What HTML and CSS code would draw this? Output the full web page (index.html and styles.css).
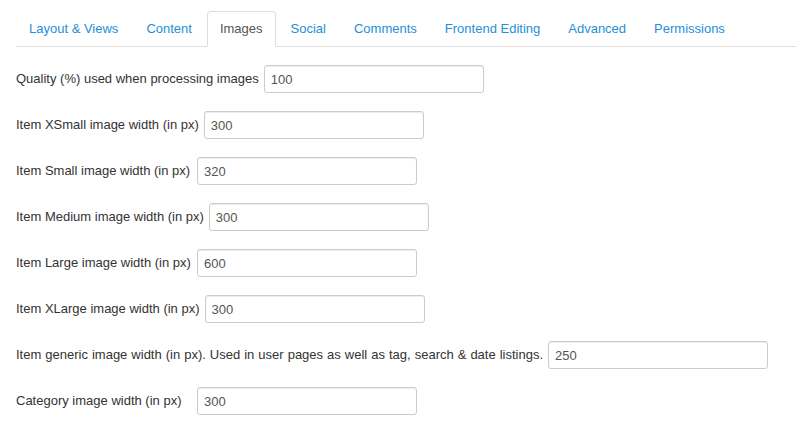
FILE: index.html
```html
<!DOCTYPE html>
<html lang="en">
<head>
    <meta charset="UTF-8">
    <meta name="viewport" content="width=device-width, initial-scale=1.0">
    <title>Images settings</title>
    <link rel="stylesheet" href="styles.css">
</head>
<body>
    <div class="container">
        <!-- Onglets -->
        <ul class="nav-tabs">
            <li><a href="#">Layout &amp; Views</a></li>
            <li><a href="#">Content</a></li>
            <li class="active"><a href="#">Images</a></li>
            <li><a href="#">Social</a></li>
            <li><a href="#">Comments</a></li>
            <li><a href="#">Frontend Editing</a></li>
            <li><a href="#">Advanced</a></li>
            <li><a href="#">Permissions</a></li>
        </ul>

        <!-- Paramètres des images -->
        <div class="tab-content">
            <div class="control-group">
                <label for="quality">Quality (%) used when processing images</label>
                <input type="text" id="quality" value="100">
            </div>
            <div class="control-group">
                <label for="xsmall">Item XSmall image width (in px)</label>
                <input type="text" id="xsmall" value="300">
            </div>
            <div class="control-group">
                <label for="small">Item Small image width (in px)</label>
                <input type="text" id="small" value="320">
            </div>
            <div class="control-group">
                <label for="medium">Item Medium image width (in px)</label>
                <input type="text" id="medium" value="300">
            </div>
            <div class="control-group">
                <label for="large">Item Large image width (in px)</label>
                <input type="text" id="large" value="600">
            </div>
            <div class="control-group">
                <label for="xlarge">Item XLarge image width (in px)</label>
                <input type="text" id="xlarge" value="300">
            </div>
            <div class="control-group">
                <label for="generic" class="long-label">Item generic image width (in px). Used in user pages as well as tag, search &amp; date listings.</label>
                <input type="text" id="generic" value="250">
            </div>
            <div class="control-group">
                <label for="category">Category image width (in px)</label>
                <input type="text" id="category" value="300">
            </div>
        </div>
    </div>
</body>
</html>
```

FILE: styles.css
```css
body {
    margin: 0;
    font-family: "Liberation Sans", Arial, sans-serif;
    font-size: 13px;
    line-height: 18px;
    color: #333;
    background-color: #fff;
}
.container {
    padding: 11px 0 0 16px;
}
.nav-tabs {
    display: flex;
    list-style: none;
    margin: 0 0 18px 0;
    padding: 0;
    border-bottom: 1px solid #ddd;
}
.nav-tabs li {
    margin-bottom: -1px;
}
.nav-tabs a {
    display: block;
    padding: 8px 12px;
    margin-right: 2px;
    line-height: 18px;
    border: 1px solid transparent;
    border-radius: 4px 4px 0 0;
    color: #1e8fd8;
    text-decoration: none;
}
.nav-tabs .active a {
    color: #555;
    background-color: #fff;
    border-color: #ddd #ddd transparent;
}
.control-group {
    display: flex;
    align-items: center;
    margin-bottom: 18px;
}
.control-group label {
    min-width: 176px;
    margin-right: 5px;
}
.control-group .long-label {
    word-spacing: 0.4px;
}
.control-group input {
    box-sizing: border-box;
    width: 220px;
    height: 28px;
    padding: 4px 6px;
    font-family: inherit;
    font-size: 13px;
    line-height: 18px;
    color: #555;
    border: 1px solid #ccc;
    border-radius: 3px;
    box-shadow: inset 0 1px 1px rgba(0, 0, 0, 0.075);
}
```
